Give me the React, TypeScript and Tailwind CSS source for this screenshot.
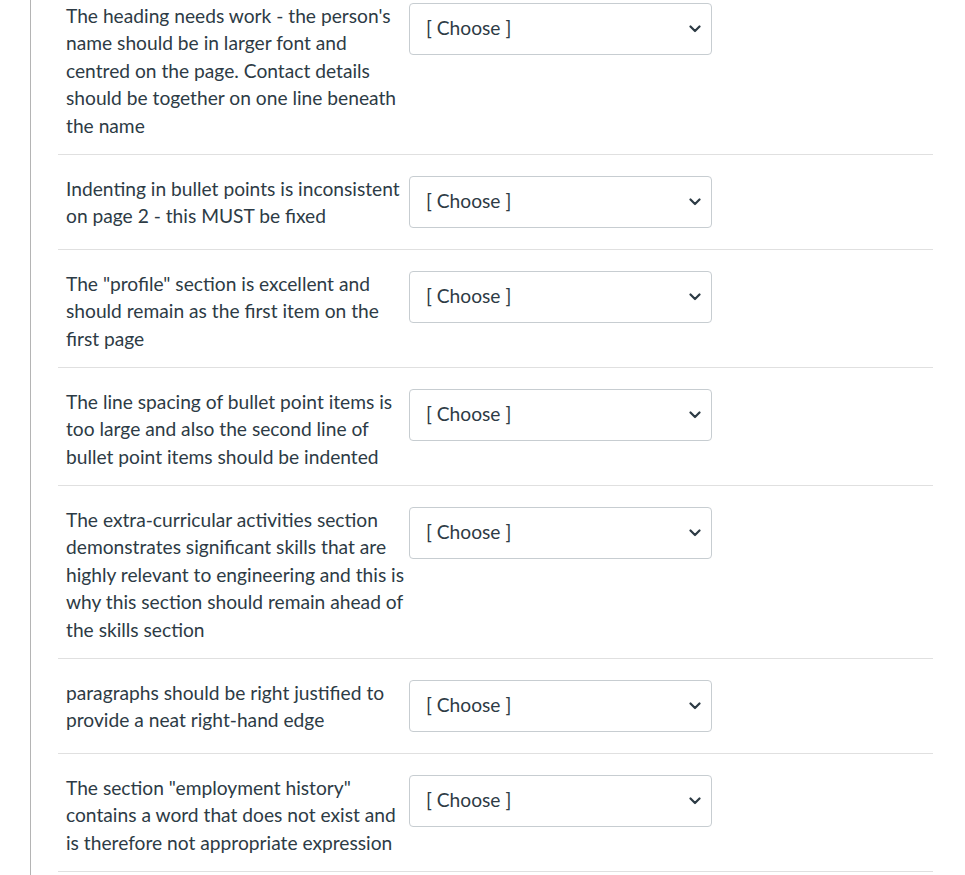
import React from 'react';

const items: string[] = [
    "The heading needs work - the person's name should be in larger font and centred on the page. Contact details should be together on one line beneath the name",
    "Indenting in bullet points is inconsistent on page 2 - this MUST be fixed",
    'The "profile" section is excellent and should remain as the first item on the first page',
    "The line spacing of bullet point items is too large and also the second line of bullet point items should be indented",
    "The extra-curricular activities section demonstrates significant skills that are highly relevant to engineering and this is why this section should remain ahead of the skills section",
    "paragraphs should be right justified to provide a neat right-hand edge",
    'The section "employment history" contains a word that does not exist and is therefore not appropriate expression',
];

function ChooseSelect() {
    return (
        <div className="flex items-center justify-between w-[303px] h-[52px] border border-[#c7cdd1] rounded-[4px] bg-white pl-[16px] pr-[10px]">
            <span className="text-[19.2px] leading-[24px] -mt-[2px] text-[#2d3b45]">[ Choose ]</span>
            <svg width="12" height="8" viewBox="0 0 12 8" fill="none">
                <path d="M1.5 1.5 L6 6 L10.5 1.5" stroke="#2d3b45" strokeWidth="2.2" strokeLinecap="round" strokeLinejoin="round" />
            </svg>
        </div>
    );
}

export default function App() {
    return (
        <div className="bg-white font-['Lato','Liberation_Sans',sans-serif] text-[#2d3b45] overflow-hidden h-[875px]">
            <div className="flex flex-col ml-[30px] border-l border-[#b4b4b4] w-[903px] pl-[27px] h-[875px]">
                <div className="-mt-[18px]">
                    {items.map((text, i) => (
                        <div key={i} className="flex items-start border-b border-[#e0e0e0] pl-[8px]">
                            <div className="w-[343px] pt-[19.5px] pb-[15px] text-[19.2px] leading-[27.5px]">
                                {text}
                            </div>
                            <div className="pt-[21px] pb-[21px]">
                                <ChooseSelect />
                            </div>
                        </div>
                    ))}
                </div>
            </div>
        </div>
    );
}
